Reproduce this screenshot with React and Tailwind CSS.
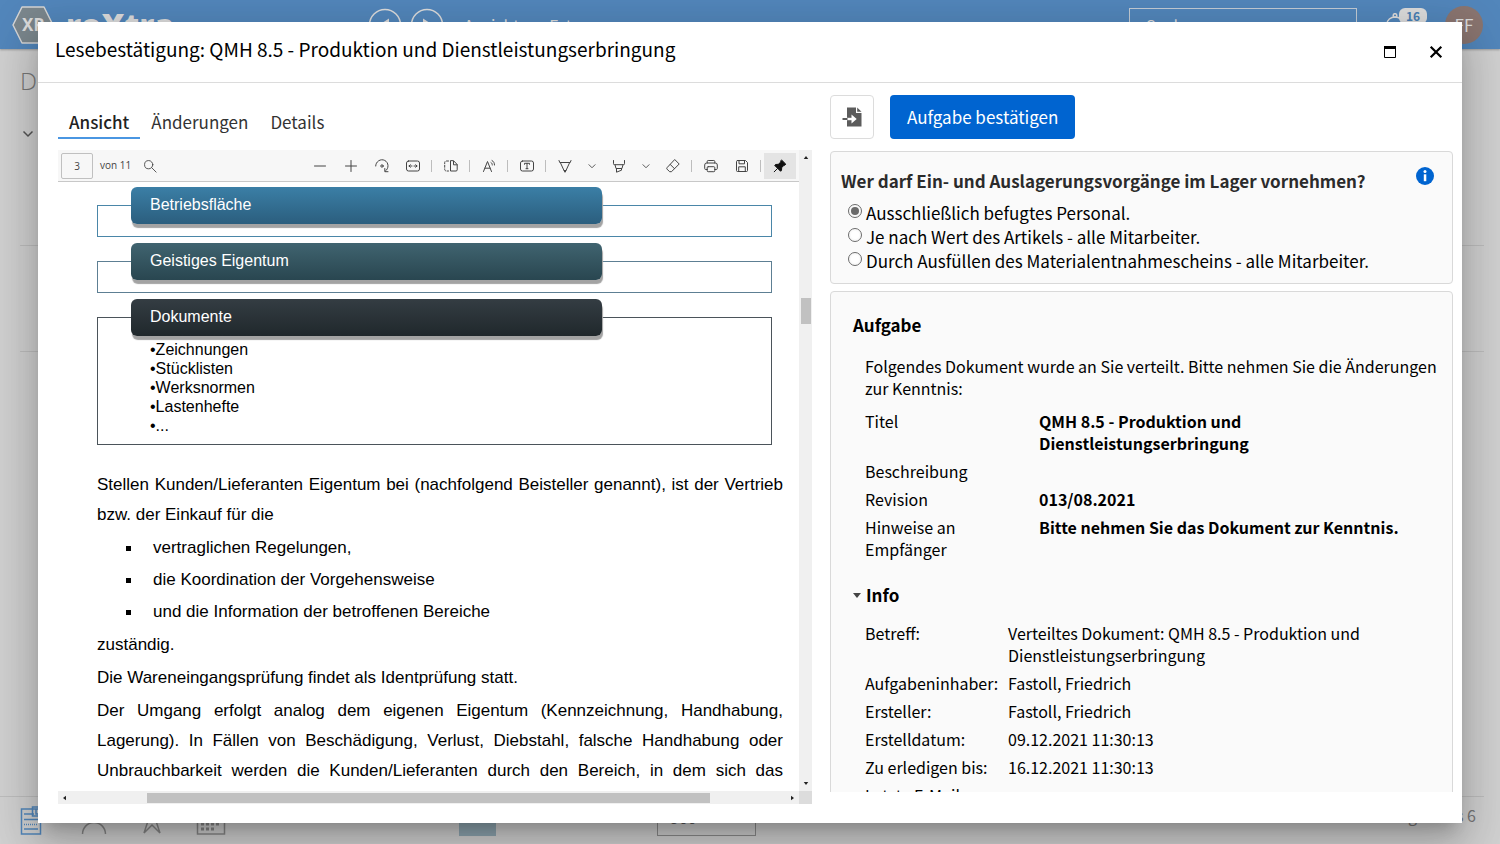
import React, { useState } from "react";

const TABS = ["Ansicht", "Änderungen", "Details"];

const ANSWERS = [
  "Ausschließlich befugtes Personal.",
  "Je nach Wert des Artikels - alle Mitarbeiter.",
  "Durch Ausfüllen des Materialentnahmescheins - alle Mitarbeiter.",
];

const TASK_ROWS = [
  ["Titel", "QMH 8.5 - Produktion und Dienstleistungserbringung"],
  ["Beschreibung", ""],
  ["Revision", "013/08.2021"],
  ["Hinweise an Empfänger", "Bitte nehmen Sie das Dokument zur Kenntnis."],
];

const INFO_ROWS = [
  ["Betreff:", "Verteiltes Dokument: QMH 8.5 - Produktion und Dienstleistungserbringung"],
  ["Aufgabeninhaber:", "Fastoll, Friedrich"],
  ["Ersteller:", "Fastoll, Friedrich"],
  ["Erstelldatum:", "09.12.2021 11:30:13"],
  ["Zu erledigen bis:", "16.12.2021 11:30:13"],
  ["Letzte E-Mail:", ""],
];

// Thin line icon used by the PDF toolbar
function Icon({ children, className = "size-4" }) {
  return (
    <svg
      viewBox="0 0 16 16"
      className={className}
      fill="none"
      stroke="currentColor"
      strokeWidth="1"
      strokeLinecap="round"
      strokeLinejoin="round"
      aria-hidden="true"
    >
      {children}
    </svg>
  );
}

function Tool({ label, children }) {
  return (
    <button type="button" aria-label={label} className="flex h-[26px] w-[31px] items-center justify-center">
      <Icon>{children}</Icon>
    </button>
  );
}

function Chevron({ label }) {
  return (
    <button type="button" aria-label={label} className="flex h-[26px] w-[23px] items-center justify-center">
      <Icon className="size-3.5">
        <path d="M4.500 6.500L8 10l3.500-3.500" />
      </Icon>
    </button>
  );
}

function Separator() {
  return (
    <span className="flex w-[7px] justify-center">
      <span className="h-3 w-px bg-[#bdbdbd]" />
    </span>
  );
}

function PdfToolbar() {
  const [page, setPage] = useState("3");

  return (
    <div className="flex h-8 shrink-0 items-center border-b border-[#c8c8c8] bg-[#f7f7f7] px-[3px] text-[#444]">
      <input
        aria-label="Seite"
        value={page}
        onChange={(e) => setPage(e.target.value)}
        className="h-[26px] w-8 rounded-xs border border-[#c0c0c0] bg-[#f7f7f7] text-center font-['Open_Sans',sans-serif] text-[10px]"
      />
      <span className="ml-[7px] font-['Open_Sans',sans-serif] text-[10px]">von 11</span>
      <button type="button" aria-label="Suchen" className="ml-[11px] flex size-4 items-center justify-center">
        <Icon className="size-3.5">
          <circle cx="6.500" cy="6.500" r="4.700" />
          <path d="M10 10l5 5" />
        </Icon>
      </button>

      <div className="ml-auto flex items-center">
        <Tool label="Verkleinern">
          <path d="M2.500 8h11" />
        </Tool>
        <Tool label="Vergrößern">
          <path d="M2.500 8h11M8 2.500v11" />
        </Tool>
        <Tool label="Drehen">
          <path d="M1.700 8a6.200 6.200 0 1 1 9.800 5M10.800 10.500v3.200h3.200" />
          <circle cx="8" cy="8" r="1.200" />
        </Tool>
        <Tool label="An Breite anpassen">
          <rect x="1.500" y="3" width="13" height="10" rx="2" />
          <path d="M4 8h3M9 8h3M5.300 6.700L4 8l1.300 1.300M10.700 6.700L12 8l-1.300 1.300" />
        </Tool>
        <Separator />
        <Tool label="Seitenansicht">
          <path d="M7.500 3v10h5.500a1.200 1.200 0 0 0 1.200-1.200V6.500L10.800 3zM10.500 3.200v3.600h3.500" />
          <path d="M5.500 3H3.200A1.500 1.500 0 0 0 1.700 4.500v7A1.500 1.500 0 0 0 3.200 13h2.300" strokeDasharray="2 1.600" />
        </Tool>
        <Separator />
        <Tool label="Laut vorlesen">
          <path d="M2.500 13.500L6.500 3.500l4 10M3.900 10.200h5.200M10 4.500c.9.500 1.300 1.400 1.300 2.500M11 2.500c1.700.9 2.500 2.500 2.500 4.500" />
        </Tool>
        <Separator />
        <Tool label="Text hinzufügen">
          <rect x="1.500" y="3" width="13" height="10" rx="2" />
          <path d="M5.500 6.300V5.300h5v1M8 5.300v5.400M7 10.700h2" />
        </Tool>
        <Separator />
        <Tool label="Zeichnen">
          <path d="M2 2.500l.8 2h10.400l.8-2M3.300 4.500L7 12.500h2l3.700-8M7 12.500l1 1.800 1-1.800" />
        </Tool>
        <Chevron label="Zeichenoptionen" />
        <Tool label="Hervorheben">
          <path d="M2.500 2.500v3.200c0 .7.300 1 1 1h9c.7 0 1-.3 1-1V2.500M4 6.700l1 3.800h6l1-3.800M5.500 10.500v3.700l5-2v-1.700" />
        </Tool>
        <Chevron label="Hervorhebungsoptionen" />
        <Tool label="Radieren">
          <path d="M10 1.800l4.200 4.200-7.700 7.700H4.600L2 11.100a1 1 0 0 1 0-1.400zM5.300 6.500l4.200 4.200" />
        </Tool>
        <Separator />
        <Tool label="Drucken">
          <path d="M4.200 5V3.500a1 1 0 0 1 1-1h5.600a1 1 0 0 1 1 1V5M4.200 11.500H2.700a1 1 0 0 1-1-1V7a2 2 0 0 1 2-2h8.600a2 2 0 0 1 2 2v3.500a1 1 0 0 1-1 1h-1.500" />
          <rect x="4.200" y="8.700" width="7.600" height="5" rx="1" />
        </Tool>
        <Tool label="Speichern">
          <path d="M3.500 2.500h8l2 2v8a1 1 0 0 1-1 1h-9a1 1 0 0 1-1-1v-9a1 1 0 0 1 1-1zM5 2.500v3.300h5.500V2.500M4.700 13.500V8.800h6.600v4.700" />
        </Tool>
        <Separator />
        <button
          type="button"
          aria-label="Symbolleiste lösen"
          className="flex h-[26px] w-8 items-center justify-center bg-[#e4e4e4] text-[#111]"
        >
          <Icon>
            <path
              d="M9.800 2.200l4 4-.8.900-1 .1-2.300 2.500-.2 2.700-.9.900L2.700 7.400l.9-.9 2.700-.2 2.500-2.300.1-1zM5.500 10.500L2.200 13.800"
              fill="currentColor"
            />
          </Icon>
        </button>
      </div>
    </div>
  );
}

function PdfPage() {
  return (
    <div className="min-h-0 flex-1 overflow-hidden pt-[23px] pr-4 pl-[39px] font-['Liberation_Sans',Arial,sans-serif] text-black">
      <div className="mr-[11px] flex flex-col gap-6 text-base leading-[19px]">
        <section className="h-8 border border-[#4a86a8]">
          <h3 className="-mt-[19px] ml-[33px] flex h-[37px] w-[70%] items-center rounded-md bg-linear-to-b from-[#3b7fa6] to-[#2b5e7e] px-[19px] pb-0.5 text-white shadow-[1px_4px_1px_#a3a3a3]">
            Betriebsfläche
          </h3>
        </section>
        <section className="h-8 border border-[#5d7f93]">
          <h3 className="-mt-[19px] ml-[33px] flex h-[37px] w-[70%] items-center rounded-md bg-linear-to-b from-[#406470] to-[#294650] px-[19px] pb-0.5 text-white shadow-[1px_4px_1px_#a3a3a3]">
            Geistiges Eigentum
          </h3>
        </section>
        <section className="h-32 border border-[#4b545a]">
          <h3 className="-mt-[19px] ml-[33px] flex h-[37px] w-[70%] items-center rounded-md bg-linear-to-b from-[#343d43] to-[#20282c] px-[19px] pb-0.5 text-white shadow-[1px_4px_1px_#a3a3a3]">
            Dokumente
          </h3>
          <ul className="mt-1 ml-[52px]">
            {["Zeichnungen", "Stücklisten", "Werksnormen", "Lastenhefte", "..."].map((item) => (
              <li key={item}>•{item}</li>
            ))}
          </ul>
        </section>
      </div>

      <div className="mt-[25px] text-[17px] leading-[30px]">
        <p className="text-justify">
          Stellen Kunden/Lieferanten Eigentum bei (nachfolgend Beisteller genannt), ist der Vertrieb bzw. der
          Einkauf für die
        </p>
        <ul className="my-[3px] flex flex-col gap-0.5">
          {[
            "vertraglichen Regelungen,",
            "die Koordination der Vorgehensweise",
            "und die Information der betroffenen Bereiche",
          ].map((item) => (
            <li key={item} className="flex items-center">
              <span className="mr-[22px] ml-[29px] size-[5px] bg-black" />
              {item}
            </li>
          ))}
        </ul>
        <p>zuständig.</p>
        <p className="mt-[3px]">Die Wareneingangsprüfung findet als Identprüfung statt.</p>
        <p className="mt-[3px] text-justify">
          Der Umgang erfolgt analog dem eigenen Eigentum (Kennzeichnung, Handhabung, Lagerung). In Fällen von
          Beschädigung, Verlust, Diebstahl, falsche Handhabung oder Unbrauchbarkeit werden die Kunden/Lieferanten
          durch den Bereich, in dem sich das Eigentum befindet, informiert.
        </p>
      </div>
    </div>
  );
}

function PdfViewer() {
  return (
    <div className="mt-[11px] flex min-h-0 flex-1 flex-col">
      <div className="flex min-h-0 flex-1">
        <div className="flex min-w-0 flex-1 flex-col">
          <PdfToolbar />
          <PdfPage />
        </div>
        {/* vertical scrollbar */}
        <div className="flex w-[13px] flex-col items-center bg-[#f0f0f0] text-[#222]">
          <svg viewBox="0 0 6 4" className="mt-1.5 h-[3px] w-1.5" fill="currentColor" aria-hidden="true">
            <path d="M0 4l3-4 3 4z" />
          </svg>
          <span className="mt-[139px] h-[26px] w-2.5 bg-[#c1c1c1]" />
          <svg viewBox="0 0 6 4" className="mt-auto mb-1.5 h-[3px] w-1.5" fill="currentColor" aria-hidden="true">
            <path d="M0 0l3 4 3-4z" />
          </svg>
        </div>
      </div>
      {/* horizontal scrollbar */}
      <div className="flex h-[13px] shrink-0">
        <div className="flex flex-1 items-center bg-[#f0f0f0] px-[5px] text-[#222]">
          <svg viewBox="0 0 4 6" className="h-1.5 w-[3px]" fill="currentColor" aria-hidden="true">
            <path d="M4 0L0 3l4 3z" />
          </svg>
          <span className="ml-[81px] h-2.5 w-[77%] bg-[#c1c1c1]" />
          <svg viewBox="0 0 4 6" className="ml-auto h-1.5 w-[3px]" fill="currentColor" aria-hidden="true">
            <path d="M0 0l4 3-4 3z" />
          </svg>
        </div>
        <span className="w-[13px] bg-[#dcdcdc]" />
      </div>
    </div>
  );
}

function DataTable({ rows, labelClass, valueClass }) {
  return (
    <table className="w-full table-fixed text-left">
      <tbody>
        {rows.map(([label, value]) => (
          <tr key={label} className="align-top">
            <th scope="row" className={labelClass}>
              {label}
            </th>
            <td className={valueClass}>{value}</td>
          </tr>
        ))}
      </tbody>
    </table>
  );
}

function TaskPanel() {
  const [answer, setAnswer] = useState(0);
  const [infoOpen, setInfoOpen] = useState(true);

  return (
    <div className="mb-[31px] flex min-w-0 flex-[623] flex-col overflow-hidden pt-3">
      <div className="flex shrink-0 gap-4">
        <button
          type="button"
          aria-label="Dokument öffnen"
          className="flex size-11 items-center justify-center rounded-sm border border-[#dcdcdc] bg-white"
        >
          <svg viewBox="0 0 20 20" className="size-5" aria-hidden="true">
            <path d="M5 0.500h9v5.500h5.500V19.500H5z" fill="#5c5c5c" />
            <path d="M15.200 0.500v4.300h4.300z" fill="#5c5c5c" />
            <path d="M5 12h5.200" stroke="#fff" strokeWidth="2.400" />
            <path d="M9.500 7.600l5.200 4.400-5.200 4.400z" fill="#fff" />
            <path d="M0.500 12h5" stroke="#5c5c5c" strokeWidth="2" />
          </svg>
        </button>
        <button type="button" className="h-11 rounded-sm bg-[#0064d0] px-[17px] text-[17px] text-white">
          Aufgabe bestätigen
        </button>
      </div>

      <fieldset className="mt-3 shrink-0 rounded-sm border border-[#d9d9d9] bg-[#fafafa] px-2.5 pt-[15px] pb-2.5">
        <div className="flex items-start justify-between">
          <h2 className="text-[17px] leading-7 font-bold text-[#2b2b2b]">
            Wer darf Ein- und Auslagerungsvorgänge im Lager vornehmen?
          </h2>
          <button
            type="button"
            aria-label="Information"
            className="mr-2 flex size-[18px] items-center justify-center rounded-full bg-[#0064d0]"
          >
            <svg viewBox="0 0 18 18" className="size-[18px]" fill="#fff" aria-hidden="true">
              <circle cx="9" cy="4.600" r="1.500" />
              <path d="M7.800 7.300h2.500v6.900H7.800z" />
            </svg>
          </button>
        </div>
        <div className="mt-1.5">
          {ANSWERS.map((text, idx) => (
            <label key={text} className="flex h-6 items-center pl-[7px] text-[17px] leading-6 text-black">
              <input
                type="radio"
                name="answer"
                checked={answer === idx}
                onChange={() => setAnswer(idx)}
                className="mr-1 mb-1 size-3.5 appearance-none rounded-full border border-[#6b6b6b] bg-white bg-clip-content p-0.5 checked:bg-[#6b6b6b]"
              />
              {text}
            </label>
          ))}
        </div>
      </fieldset>

      <section className="mt-[7px] shrink-0 rounded-sm border border-[#d9d9d9] bg-[#fafafa] pt-[21px] pr-2 pl-[22px] text-base leading-[22px] text-black">
        <h2 className="text-[17px] leading-6 font-bold">Aufgabe</h2>
        <div className="mt-[18px] pl-3">
          <p>Folgendes Dokument wurde an Sie verteilt. Bitte nehmen Sie die Änderungen zur Kenntnis:</p>
          <div className="mt-2">
            <DataTable
              rows={TASK_ROWS}
              labelClass="w-[174px] py-[3px] pr-6 font-normal"
              valueClass="py-[3px] font-bold"
            />
          </div>
        </div>

        <h2 className="mt-5 text-[17px] leading-6 font-bold">
          <button
            type="button"
            aria-expanded={infoOpen}
            onClick={() => setInfoOpen(!infoOpen)}
            className="flex items-center gap-[5px]"
          >
            <svg viewBox="0 0 8 5" className="h-[5px] w-2" fill="#444" aria-hidden="true">
              <path d="M0 0h8L4 5z" />
            </svg>
            Info
          </button>
        </h2>
        {infoOpen && (
          <div className="mt-3 pl-3">
            <DataTable rows={INFO_ROWS} labelClass="w-[143px] py-[3px] font-normal" valueClass="py-[3px]" />
          </div>
        )}
      </section>
    </div>
  );
}

// Document portal behind the dialog, already dimmed
function Backdrop() {
  return (
    <div aria-hidden="true" className="flex h-screen flex-col bg-[#d0d0d0]">
      <header className="flex h-[49px] shrink-0 items-center bg-[#5286bb] pr-[17px] pl-3 text-[#dcdcdc] shadow-[0_1px_2px_#999]">
        <svg viewBox="0 0 42 38" className="h-[38px] w-[42px]">
          <path d="M10 1h22l9 18-9 18H10L1 19z" fill="#7b878d" stroke="#d5d5d5" strokeWidth="1.500" strokeLinejoin="round" />
          <text x="10" y="25" fontSize="17" fontWeight="700" fill="#dcdcdc" fontFamily="Noto Sans">
            XR
          </text>
        </svg>
        <span className="ml-3 w-[302px] font-['Open_Sans',sans-serif] text-[32px] leading-10 font-extrabold">
          roXtra
        </span>
        <svg viewBox="0 0 76 34" className="h-[34px] w-[76px]" fill="none" stroke="#dcdcdc" strokeWidth="1.500">
          <circle cx="17" cy="17" r="15.500" />
          <circle cx="59" cy="17" r="15.500" />
          <path d="M21 10.500v13L11 17zM55 10.500v13L65 17z" fill="#dcdcdc" stroke="none" />
        </svg>
        <span className="ml-5 text-base">Ansicht</span>
        <span className="ml-[30px] text-base">Extras</span>
        <span className="ml-auto flex h-[34px] w-[228px] items-center border border-[#c3ccd5] pl-4 text-base">Suchen</span>
        <svg viewBox="0 0 20 24" className="ml-[26px] h-6 w-5" fill="none" stroke="#dcdcdc" strokeWidth="1.500">
          <circle cx="12" cy="2.500" r="1.800" />
          <path d="M4 18v-7a8 7 0 0 1 16 0v7z" />
        </svg>
        <span className="-ml-1 mb-[18px] flex h-4 w-7 items-center justify-center rounded-md bg-[#dcdcdc] text-xs font-bold text-[#4a7fb5]">
          16
        </span>
        <span className="ml-[18px] flex size-[38px] items-center justify-center rounded-full bg-[#8a7570] text-[17px]">FF</span>
      </header>

      <div className="flex-1 pt-3.5 pr-4 pl-5">
        <p className="font-['Open_Sans',sans-serif] text-2xl leading-9 font-light text-[#777]">Dokumente</p>
        <svg viewBox="0 0 12 8" className="mt-[31px] ml-0.5 h-2 w-3" fill="none" stroke="#555" strokeWidth="1.500">
          <path d="M1.500 1.500L6 6l4.500-4.500" />
        </svg>
        <div className="mt-[107px] h-[107px] border-y border-[#bdbdbd]" />
      </div>

      <footer className="mr-4 flex h-12 shrink-0 items-start border-t border-[#bdbdbd] pt-2 pl-5 text-base leading-5 text-[#777]">
        <svg viewBox="0 0 210 32" className="h-8 w-[210px]" fill="none" stroke="#888" strokeWidth="1.500">
          <g stroke="#5286bb">
            <path d="M1.500 4h19v25h-19zM4 9h10M4 14.500h14M4 24h14" />
            <path d="M4 19.500h14" strokeDasharray="1 1" />
            <path d="M12.500 2h8v9h-8zM16 4v5h4" />
          </g>
          <path d="M62.500 29a11.500 11.500 0 0 1 23 0M124 28l8-24 8 24-8-8zM177.500 5h27v24h-27z" />
          <path d="M181 19h20M181 24h14" strokeWidth="3" strokeDasharray="3 2" />
        </svg>
        <span className="ml-[229px] h-[31px] w-[37px] bg-[#8fa6b1]" />
        <span className="ml-[88px] w-[73px] text-[13px]">Seitengröße:</span>
        <span className="h-[31px] w-[99px] border border-[#8c8c8c] pl-3 leading-[22px] text-[#555]">500</span>
        <span className="ml-auto pr-2">Einträge 1 bis 6</span>
      </footer>
    </div>
  );
}

export default function App() {
  const [tab, setTab] = useState("Ansicht");

  return (
    <div className="relative h-screen overflow-hidden font-['Noto_Sans_CJK_SC',sans-serif]">
      <Backdrop />

      <div className="absolute inset-0 flex px-[38px] pt-[22px] pb-[21px]">
        <div
          role="dialog"
          aria-labelledby="dialog-title"
          className="flex min-w-0 flex-1 flex-col bg-white shadow-[0_11px_15px_-7px_rgba(0,0,0,0.2),0_24px_38px_3px_rgba(0,0,0,0.14),0_9px_46px_8px_rgba(0,0,0,0.12)]"
        >
          <div className="flex h-[61px] shrink-0 items-center border-b border-[#dcdcdc] pr-[19px] pl-[17px]">
            <h1 id="dialog-title" className="mb-1.5 text-[19px] text-black">
              Lesebestätigung: QMH 8.5 - Produktion und Dienstleistungserbringung
            </h1>
            <button type="button" aria-label="Maximieren" className="ml-auto">
              <svg viewBox="0 0 12 12" className="h-3 w-3" fill="none" stroke="#000" aria-hidden="true">
                <path d="M.5.5h11v11H.5z" />
                <path d="M0 1.500h12" strokeWidth="3" />
              </svg>
            </button>
            <button type="button" aria-label="Schließen" className="ml-[33px]">
              <svg viewBox="0 0 14 14" className="size-3.5" stroke="#000" strokeWidth="2.200" aria-hidden="true">
                <path d="M1.700 1.700l10.600 10.600M12.300 1.700L1.700 12.300" />
              </svg>
            </button>
          </div>

          <div className="flex min-h-0 flex-1 gap-[18px] pr-[9px] pl-5">
            <div className="mb-[19px] flex min-w-0 flex-[754] flex-col pt-[25px]">
              <div role="tablist" className="flex h-[31px] shrink-0 text-[17px] leading-[26px] text-[#333]">
                {TABS.map((name) => (
                  <button
                    key={name}
                    type="button"
                    role="tab"
                    aria-selected={tab === name}
                    onClick={() => setTab(name)}
                    className={
                      tab === name
                        ? "border-b-2 border-[#4a96e2] px-[11px] pb-0.5 font-medium text-[#222]"
                        : "border-b-2 border-transparent px-[11px] pb-0.5"
                    }
                  >
                    {name}
                  </button>
                ))}
              </div>
              <PdfViewer />
            </div>
            <TaskPanel />
          </div>
        </div>
      </div>
    </div>
  );
}
